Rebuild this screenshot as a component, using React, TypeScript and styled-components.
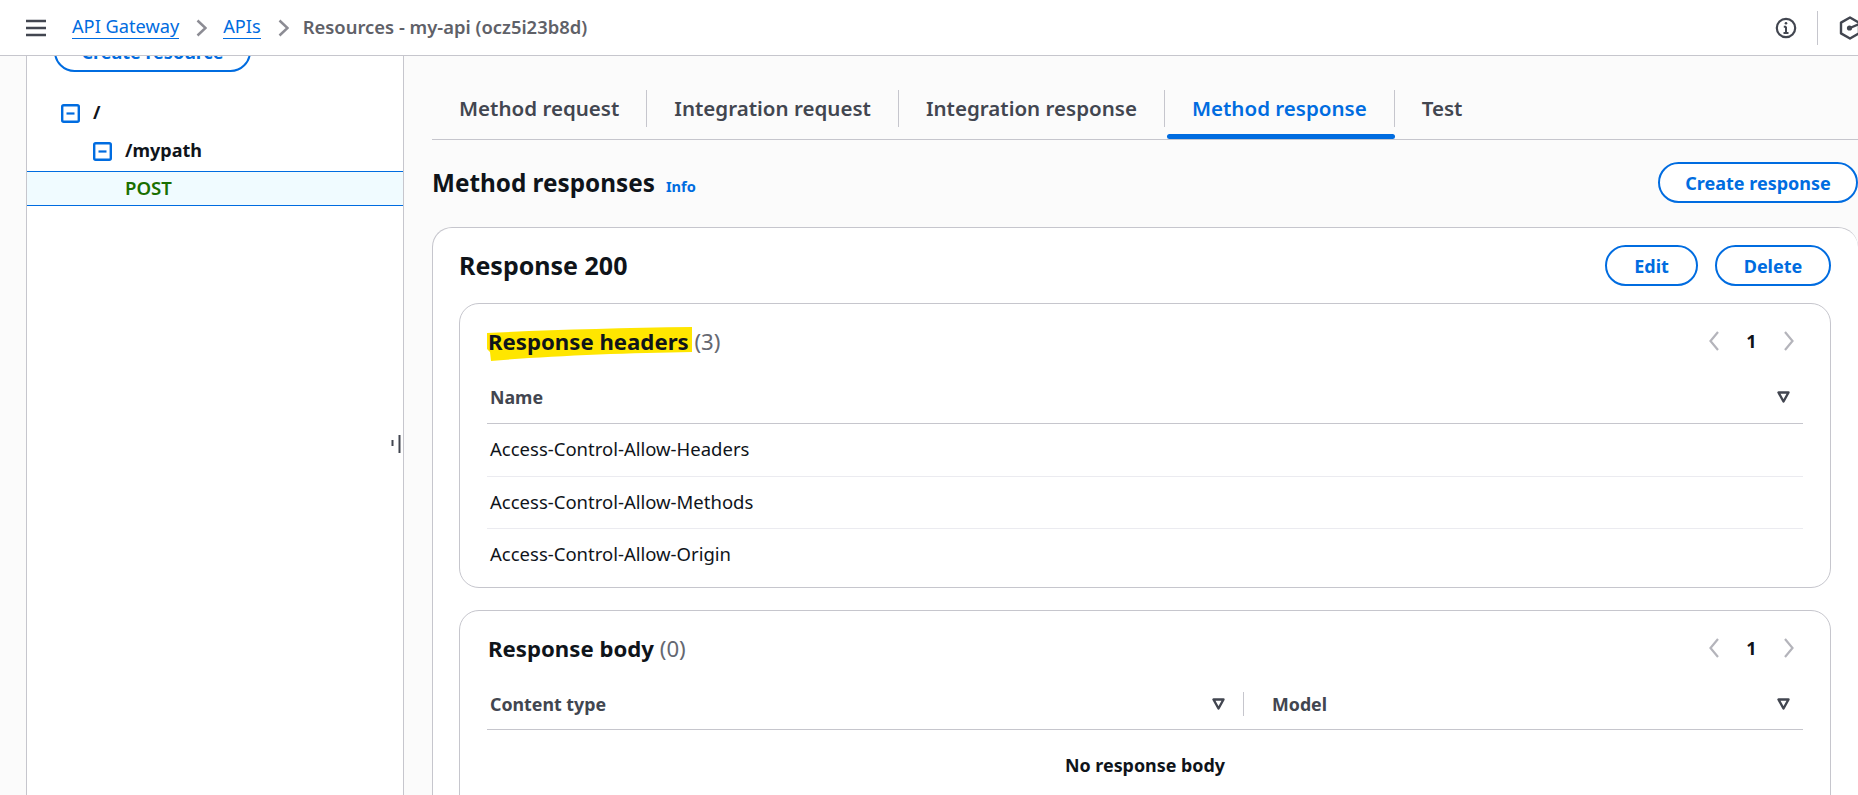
import styled, { createGlobalStyle } from 'styled-components';

const GlobalStyle = createGlobalStyle`
  html, body {
    margin: 0;
    padding: 0;
    height: 795px;
    overflow: hidden;
    background: #fbfbfb;
    font-family: 'Noto Sans', 'Open Sans', sans-serif;
    color: #0f141a;
  }
`;

const Page = styled.div`
  height: 795px;
  display: flex;
  flex-direction: column;
  overflow: hidden;
`;

const TopBar = styled.header`
  height: 55px;
  flex: none;
  background: #fff;
  border-bottom: 1px solid #c6c6cd;
  display: flex;
  align-items: center;
  padding-left: 26px;
`;

const Burger = styled.svg`
  width: 20px;
  height: 18px;
  margin-right: 26px;
  color: #424650;
`;

const Crumb = styled.a`
  font-size: 18.2px;
  color: #006ce0;
  border-bottom: 1px solid #006ce0;
  line-height: 23px;
  margin-bottom: 2px;
`;

const CrumbArrow = styled.svg`
  width: 11px;
  height: 18px;
  margin: 0 16px 0 17px;
  color: #8c8c94;
`;

const CrumbCurrent = styled.span`
  font-size: 18.4px;
  font-weight: 600;
  color: #5f6168;
  margin: 0 0 2px -2px;
`;

const TopRight = styled.div`
  margin-left: auto;
  display: flex;
  align-items: center;
  width: 83px;
  overflow: hidden;
`;

const InfoIcon = styled.svg`
  width: 22px;
  height: 22px;
  flex: none;
  color: #424650;
`;

const TopDivider = styled.div`
  width: 1px;
  height: 34px;
  background: #c6c6cd;
  margin: 0 21px 0 20px;
  flex: none;
`;

const HexIcon = styled.svg`
  width: 22px;
  height: 24px;
  flex: none;
  color: #424650;
`;

const Body = styled.div`
  flex: 1;
  min-height: 0;
  display: flex;
  overflow: hidden;
  padding-left: 26px;
`;

const SidePanel = styled.aside`
  width: 378px;
  flex: none;
  box-sizing: border-box;
  background: #fff;
  border-left: 1px solid #c6c6cd;
  border-right: 1px solid #c6c6cd;
  position: relative;
`;

const CreateResource = styled.button`
  display: block;
  width: 197px;
  height: 41px;
  margin: -25px 0 0 27px;
  background: #fff;
  border: 2px solid #006ce0;
  border-radius: 21px;
  color: #006ce0;
  font: 700 18px 'Noto Sans', sans-serif;
  padding: 0;
`;

const Tree = styled.div`
  margin-top: 22px;
`;

const TreeRow = styled.div<{ $depth: number; $selected?: boolean }>`
  box-sizing: border-box;
  height: ${(p) => (p.$selected ? 35 : 38)}px;
  display: flex;
  align-items: center;
  padding-left: ${(p) => 34 + p.$depth * 32}px;
  ${(p) =>
    p.$selected &&
    `background: #f0fbff;
     margin-top: 1px;
     border-top: 1px solid #006ce0;
     border-bottom: 1px solid #006ce0;`}
`;

const TreeIcon = styled.svg`
  width: 19px;
  height: 19px;
  margin-right: 13px;
  flex: none;
`;

const TreeLabel = styled.span`
  font-size: 18px;
  font-weight: 700;
  color: #0f141a;
  padding-bottom: 3px;
`;

const MethodLabel = styled.span`
  font-size: 18.6px;
  font-weight: 600;
  color: #1a6f00;
  margin-left: 32px;
  padding-bottom: 3px;
`;

const ResizeHandle = styled.svg`
  position: absolute;
  left: 364px;
  top: 378px;
  width: 10px;
  height: 20px;
  color: #424650;
`;

const Main = styled.main`
  flex: 1;
  min-width: 0;
  padding: 0 0 0 28px;
  background: #fbfbfb;
`;

const Tabs = styled.nav`
  height: 84px;
  box-sizing: border-box;
  display: flex;
  align-items: flex-end;
  border-bottom: 1px solid #c6c6cd;
`;

const Tab = styled.div<{ $active?: boolean; $last?: boolean }>`
  position: relative;
  height: 52px;
  box-sizing: border-box;
  padding: 0 28px 11px 27px;
  display: flex;
  align-items: center;
  font-size: 20.54px;
  font-weight: 600;
  color: ${(p) => (p.$active ? '#006ce0' : '#424650')};
  ${(p) =>
    p.$active &&
    `&::after {
       content: '';
       position: absolute;
       left: 2px;
       right: 0;
       bottom: 0;
       height: 5px;
       border-radius: 3px;
       background: #006ce0;
     }`}
  ${(p) =>
    !p.$last &&
    `&::before {
       content: '';
       position: absolute;
       right: 0;
       top: 3px;
       height: 37px;
       width: 1px;
       background: #c6c6cd;
     }`}
`;

const SectionHead = styled.div`
  height: 87px;
  box-sizing: border-box;
  display: flex;
  align-items: flex-start;
  justify-content: space-between;
  padding-top: 22px;
`;

const SectionTitleWrap = styled.div`
  display: flex;
  align-items: baseline;
  gap: 11px;
  padding-top: 7px;
`;

const SectionTitle = styled.h2`
  margin: 0;
  font-size: 24.3px;
  font-weight: 700;
  line-height: 28px;
`;

const InfoLink = styled.a`
  font-size: 14.6px;
  font-weight: 700;
  color: #006ce0;
`;

const PillButton = styled.button<{ $width: number }>`
  width: ${(p) => p.$width}px;
  height: 41px;
  flex: none;
  background: #fff;
  border: 2px solid #006ce0;
  border-radius: 21px;
  color: #006ce0;
  font: 700 18px 'Noto Sans', sans-serif;
  padding: 0;
`;

const OuterCard = styled.section`
  background: #fff;
  border: 1px solid #c6c6cd;
  border-right: none;
  border-radius: 20px 20px 0 0;
  padding: 17px 27px 0 26px;
  height: 640px;
  box-sizing: border-box;
`;

const CardHead = styled.div`
  height: 41px;
  margin-bottom: 17px;
  display: flex;
  align-items: center;
  justify-content: space-between;
`;

const CardTitle = styled.h3`
  margin: 0 0 2px;
  font-size: 25px;
  font-weight: 700;
`;

const ButtonRow = styled.div`
  display: flex;
  gap: 17px;
`;

const InnerCard = styled.section<{ $height: number }>`
  height: ${(p) => p.$height}px;
  box-sizing: border-box;
  background: #fff;
  border: 1px solid #c6c6cd;
  border-radius: 20px;
  margin-bottom: 22px;
  padding: 0 27px;
`;

const InnerHead = styled.div`
  height: 74px;
  padding: 0 0 2px 1px;
  display: flex;
  align-items: center;
  justify-content: space-between;
`;

const InnerTitleText = styled.h4`
  position: relative;
  isolation: isolate;
  margin: 0;
  font-size: 22.2px;
  font-weight: 700;
`;

const Marker = styled.svg`
  position: absolute;
  left: -1px;
  top: 1px;
  width: 205px;
  height: 34px;
  z-index: -1;
`;

const Count = styled.span`
  font-weight: 400;
  color: #656871;
`;

const Pager = styled.div`
  display: flex;
  align-items: center;
  margin-right: 8px;
  font-size: 18px;
  font-weight: 700;
`;

const PagerNum = styled.span`
  width: 63px;
  text-align: center;
`;

const PagerArrow = styled.svg`
  width: 12px;
  height: 22px;
  color: #b4b4bb;
`;

const ColumnHead = styled.div<{ $height: number }>`
  height: ${(p) => p.$height}px;
  box-sizing: border-box;
  display: flex;
  align-items: center;
  border-bottom: 1px solid #c6c6cd;
  padding: 0 0 ${(p) => p.$height - 34}px 3px;
`;

const HeadCell = styled.div<{ $divided?: boolean }>`
  flex: 1;
  display: flex;
  align-items: center;
  justify-content: space-between;
  font-size: 17.8px;
  font-weight: 700;
  color: #424650;
  height: 24px;
  padding-right: 13px;
  ${(p) =>
    p.$divided &&
    `flex: 0 0 754px;
     box-sizing: border-box;
     padding-right: 18px;
     border-right: 1px solid #c6c6cd;
     margin-right: 28px;`}
`;

const SortIcon = styled.svg`
  width: 13px;
  height: 12px;
  color: #424650;
`;

const Row = styled.div`
  height: 52px;
  box-sizing: border-box;
  display: flex;
  align-items: center;
  padding: 0 0 3px 3px;
  font-size: 18.5px;
  color: #0f141a;
  & + & {
    border-top: 1px solid #ebebf0;
  }
`;

const Empty = styled.div`
  text-align: center;
  font-size: 17.9px;
  font-weight: 700;
  padding-top: 23px;
`;

const headers = ['Access-Control-Allow-Headers', 'Access-Control-Allow-Methods', 'Access-Control-Allow-Origin'];
const tabs = ['Method request', 'Integration request', 'Integration response', 'Method response', 'Test'];

function MinusBox() {
  return (
    <TreeIcon viewBox="0 0 19 19" fill="none">
      <rect x="1.2" y="1.2" width="16.6" height="16.6" rx="1.5" stroke="#006ce0" strokeWidth="2.4" />
      <path d="M5.5 9.5h8" stroke="#006ce0" strokeWidth="2.2" />
    </TreeIcon>
  );
}

function Sort() {
  return (
    <SortIcon viewBox="0 0 13 12" fill="none">
      <path d="M1.5 1.5h10L6.5 10.5z" stroke="currentColor" strokeWidth="2.4" strokeLinejoin="round" />
    </SortIcon>
  );
}

function Arrow() {
  return (
    <CrumbArrow viewBox="0 0 11 18" fill="none">
      <path d="M1.5 1.5 9.5 9l-8 7.5" stroke="currentColor" strokeWidth="2.5" />
    </CrumbArrow>
  );
}

function PagerBlock() {
  return (
    <Pager>
      <PagerArrow viewBox="0 0 12 22" fill="none">
        <path d="M10 2 2.5 11l7.5 9" stroke="currentColor" strokeWidth="2.2" />
      </PagerArrow>
      <PagerNum>1</PagerNum>
      <PagerArrow viewBox="0 0 12 22" fill="none">
        <path d="M2 2l7.5 9L2 20" stroke="currentColor" strokeWidth="2.2" />
      </PagerArrow>
    </Pager>
  );
}

function App() {
  return (
    <Page>
      <GlobalStyle />
      <TopBar>
        <Burger viewBox="0 0 20 18" fill="none">
          <path d="M0 2h20M0 9h20M0 16h20" stroke="currentColor" strokeWidth="2.4" />
        </Burger>
        <Crumb>API Gateway</Crumb>
        <Arrow />
        <Crumb>APIs</Crumb>
        <Arrow />
        <CrumbCurrent>Resources - my-api (ocz5i23b8d)</CrumbCurrent>
        <TopRight>
          <InfoIcon viewBox="0 0 22 22" fill="none">
            <circle cx="11" cy="11" r="9.2" stroke="currentColor" strokeWidth="2.2" />
            <path d="M11 9.5v6.5M8.5 16h5M8.8 9.8H11" stroke="currentColor" strokeWidth="2" />
            <circle cx="11" cy="6.3" r="1.3" fill="currentColor" />
          </InfoIcon>
          <TopDivider />
          <HexIcon viewBox="0 0 22 24" fill="none">
            <path d="M11 1.5 20 6.6v10.8L11 22.5 2 17.4V6.6z" stroke="currentColor" strokeWidth="2.4" strokeLinejoin="round" />
            <circle cx="10.5" cy="12" r="2.6" fill="currentColor" />
            <path d="M11 12 20 8" stroke="currentColor" strokeWidth="2.4" />
          </HexIcon>
        </TopRight>
      </TopBar>
      <Body>
        <SidePanel>
          <CreateResource>Create resource</CreateResource>
          <Tree>
            <TreeRow $depth={0}>
              <MinusBox />
              <TreeLabel>/</TreeLabel>
            </TreeRow>
            <TreeRow $depth={1}>
              <MinusBox />
              <TreeLabel>/mypath</TreeLabel>
            </TreeRow>
            <TreeRow $depth={1} $selected>
              <MethodLabel>POST</MethodLabel>
            </TreeRow>
          </Tree>
          <ResizeHandle viewBox="0 0 10 20" fill="none">
            <path d="M1.5 6v6M8.5 1v18" stroke="currentColor" strokeWidth="2" />
          </ResizeHandle>
        </SidePanel>
        <Main>
          <Tabs>
            {tabs.map((t, i) => (
              <Tab key={t} $active={t === 'Method response'} $last={i === tabs.length - 1}>
                {t}
              </Tab>
            ))}
          </Tabs>
          <SectionHead>
            <SectionTitleWrap>
              <SectionTitle>Method responses</SectionTitle>
              <InfoLink>Info</InfoLink>
            </SectionTitleWrap>
            <PillButton $width={200}>Create response</PillButton>
          </SectionHead>
          <OuterCard>
            <CardHead>
              <CardTitle>Response 200</CardTitle>
              <ButtonRow>
                <PillButton $width={93}>Edit</PillButton>
                <PillButton $width={116}>Delete</PillButton>
              </ButtonRow>
            </CardHead>
            <InnerCard $height={285}>
              <InnerHead>
                <InnerTitleText>
                  <Marker viewBox="0 0 205 34" preserveAspectRatio="none">
                    <path d="M0 6C60 3 130 1 205 0V25C140 26 60 29 4 34L3 25 0 22z" fill="#ffe600" />
                  </Marker>
                  Response headers <Count>(3)</Count>
                </InnerTitleText>
                <PagerBlock />
              </InnerHead>
              <ColumnHead $height={44}>
                <HeadCell>
                  Name
                  <Sort />
                </HeadCell>
              </ColumnHead>
              {headers.map((h) => (
                <Row key={h}>{h}</Row>
              ))}
            </InnerCard>
            <InnerCard $height={300}>
              <InnerHead>
                <InnerTitleText>
                  Response body <Count>(0)</Count>
                </InnerTitleText>
                <PagerBlock />
              </InnerHead>
              <ColumnHead $height={43}>
                <HeadCell $divided>
                  Content type
                  <Sort />
                </HeadCell>
                <HeadCell>
                  Model
                  <Sort />
                </HeadCell>
              </ColumnHead>
              <Empty>No response body</Empty>
            </InnerCard>
          </OuterCard>
        </Main>
      </Body>
    </Page>
  );
}

export default App;
